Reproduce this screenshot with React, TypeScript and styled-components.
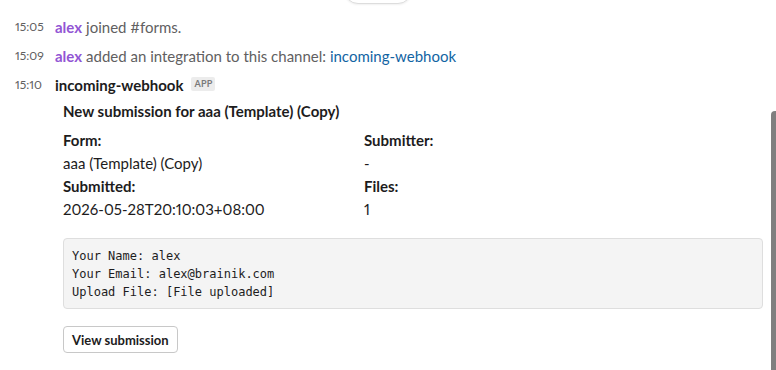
import styled, { createGlobalStyle } from "styled-components";

const Global = createGlobalStyle`
  html, body {
    margin: 0;
    padding: 0;
    background: #fff;
  }
  body {
    font-family: Lato, "Noto Sans", sans-serif;
    color: #1d1c1d;
    overflow: hidden;
    font-variant-numeric: proportional-nums;
  }
`;

const Page = styled.div`
  position: relative;
  width: 776px;
  height: 370px;
  overflow: hidden;
  padding-top: 12px;
  box-sizing: border-box;
`;

// day divider pill, scrolled mostly out of view
const DayPill = styled.div`
  position: absolute;
  top: -24px;
  left: 344px;
  width: 66px;
  height: 26px;
  border: 1px solid #dddddd;
  border-radius: 14px;
  background: #fff;
  box-shadow: 0 1px 2px rgb(0 0 0 / 0.06);
`;

const Scrollbar = styled.div`
  position: absolute;
  top: 111px;
  right: 0;
  width: 5px;
  height: 270px;
  border-radius: 4px 0 0 0;
  background: #7f7f7f;
`;

const Row = styled.div`
  display: flex;
  align-items: center;
  height: 29px;
  padding-left: 15px;
  white-space: nowrap;
`;

const Time = styled.span`
  width: 40px;
  flex: none;
  font-size: 12px;
  color: #616061;
`;

const Name = styled.span<{ $purple?: boolean }>`
  font-size: 15px;
  font-weight: 700;
  color: ${(p) => (p.$purple ? "#9255d4" : "#1d1c1d")};
  margin-right: 4px;
`;

const Body = styled.span`
  font-size: 15px;
  color: #616061;
`;

const Link = styled.span`
  color: #1264a3;
`;

const Badge = styled.span`
  display: inline-block;
  font-size: 9px;
  font-weight: 700;
  color: #7a797a;
  background: #ececec;
  border-radius: 2px;
  padding: 0 3px;
  line-height: 14px;
  margin-left: 4px;
  letter-spacing: 0.2px;
  margin-top: -2px;
`;

const Attachment = styled.div`
  padding-left: 63px;
  padding-right: 13px;
  display: flex;
  flex-direction: column;
`;

const Title = styled.div`
  font-size: 15px;
  font-weight: 700;
  line-height: 22px;
  margin-top: 1px;
`;

const Fields = styled.div`
  display: grid;
  grid-template-columns: 301px 1fr;
  margin-top: 7px;
`;

const Field = styled.div`
  display: flex;
  flex-direction: column;
`;

const Label = styled.div`
  font-size: 15px;
  font-weight: 700;
  line-height: 23px;
`;

const Value = styled.div`
  font-size: 15px;
  line-height: 23px;
`;

const Code = styled.pre`
  margin: 17px 0 0;
  padding: 8px 8px 7px;
  background: #f4f4f4;
  border: 1px solid #dedede;
  border-radius: 4px;
  font-family: "DejaVu Sans Mono", "Liberation Mono", monospace;
  font-size: 12px;
  line-height: 18px;
  color: #1d1c1d;
`;

const Button = styled.button`
  align-self: flex-start;
  margin-top: 17px;
  height: 27px;
  padding: 0 8px;
  background: #fff;
  border: 1px solid #c8c8c8;
  border-radius: 4px;
  font-family: Lato, "Noto Sans", sans-serif;
  font-size: 13px;
  font-weight: 700;
  color: #1d1c1d;
`;

export default function App() {
  return (
    <Page>
      <Global />
      <DayPill />
      <Row>
        <Time>15:05</Time>
        <Name $purple>alex</Name>
        <Body>joined #forms.</Body>
      </Row>
      <Row>
        <Time>15:09</Time>
        <Name $purple>alex</Name>
        <Body>
          added an integration to this channel: <Link>incoming-webhook</Link>
        </Body>
      </Row>
      <Row>
        <Time>15:10</Time>
        <Name>incoming-webhook</Name>
        <Badge>APP</Badge>
      </Row>
      <Attachment>
        <Title>New submission for aaa (Template) (Copy)</Title>
        <Fields>
          <Field>
            <Label>Form:</Label>
            <Value>aaa (Template) (Copy)</Value>
            <Label>Submitted:</Label>
            <Value>2026-05-28T20:10:03+08:00</Value>
          </Field>
          <Field>
            <Label>Submitter:</Label>
            <Value>-</Value>
            <Label>Files:</Label>
            <Value>1</Value>
          </Field>
        </Fields>
        <Code>
          {"Your Name: alex\nYour Email: alex@brainik.com\nUpload File: [File uploaded]"}
        </Code>
        <Button>View submission</Button>
      </Attachment>
      <Scrollbar />
    </Page>
  );
}
